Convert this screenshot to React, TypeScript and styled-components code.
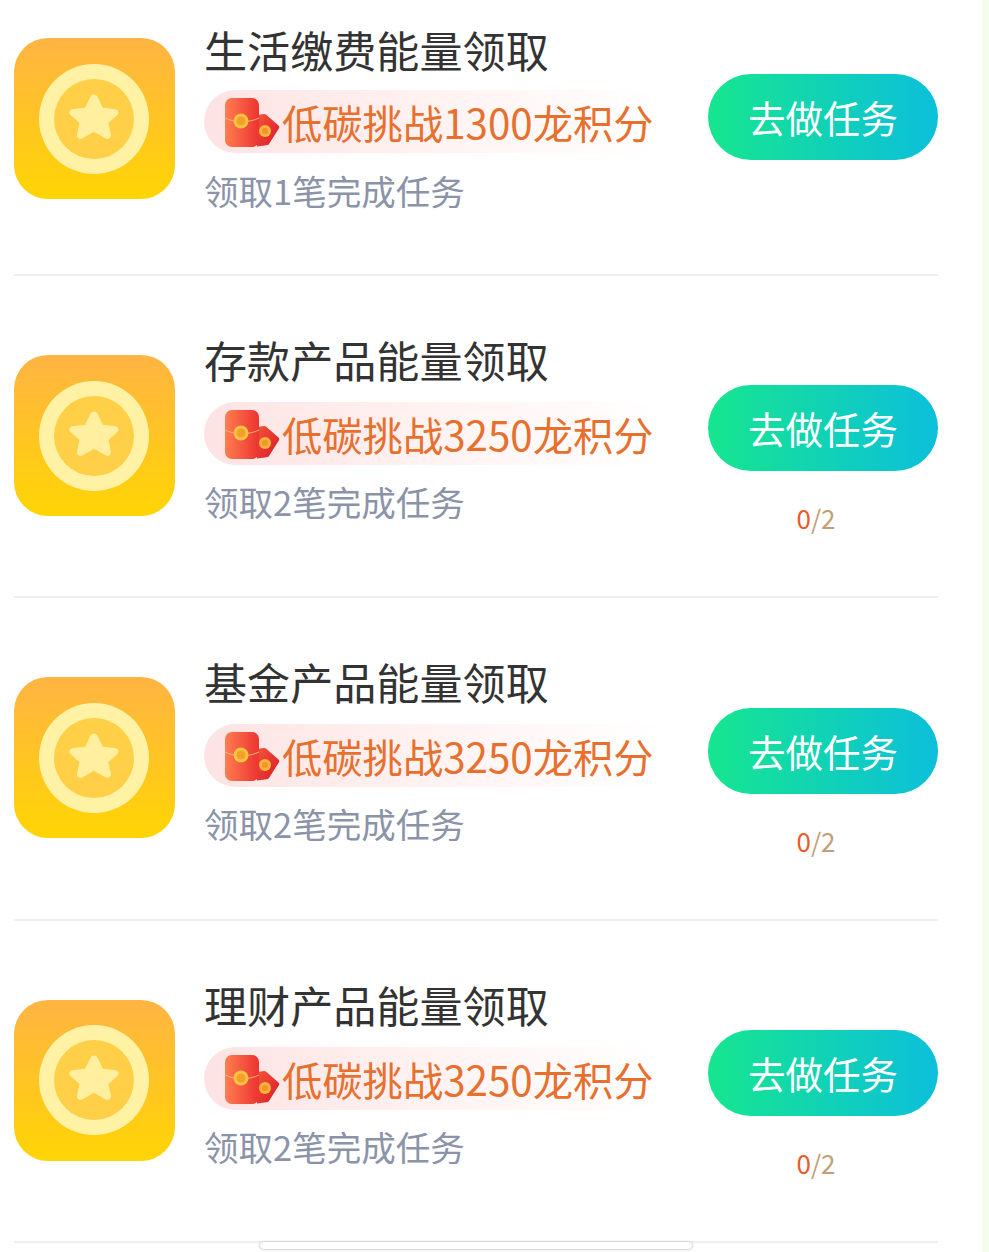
import React from 'react';
import styled, { createGlobalStyle } from 'styled-components';

const GlobalStyle = createGlobalStyle`
  html, body {
    margin: 0;
    padding: 0;
    background: #fff;
    overflow: hidden;
  }
  body {
    font-family: "Noto Sans CJK SC", "Noto Sans", sans-serif;
  }
`;

const Page = styled.div`
  position: relative;
  width: 989px;
  height: 1252px;
  display: flex;
  overflow: hidden;
  background: #fff;
`;

const List = styled.div`
  width: 924px;
  margin-left: 14px;
`;

const SideStrip = styled.div`
  width: 7px;
  margin-left: auto;
  background: #f3fde9;
`;

const Row = styled.div<{ $first?: boolean }>`
  display: flex;
  align-items: flex-start;
  box-sizing: border-box;
  height: ${p => (p.$first ? '276px' : '322.4px')};
  border-bottom: 2px solid #efefef;
`;

const CoinTile = styled.div<{ $first?: boolean }>`
  width: 161px;
  height: 161px;
  padding-right: 2px;
  box-sizing: border-box;
  margin-top: ${p => (p.$first ? '38px' : '79px')};
  border-radius: 34px;
  background: linear-gradient(180deg, #ffb443 0%, #ffd504 100%);
  display: flex;
  align-items: center;
  justify-content: center;
  flex-shrink: 0;
`;

const Info = styled.div<{ $first?: boolean }>`
  margin-top: ${p => (p.$first ? '19px' : '53px')};
  margin-left: 29px;
  width: 504px;
  flex-shrink: 0;
`;

const Title = styled.div`
  font-size: 43.1px;
  line-height: 60px;
  color: #333;
`;

const Tag = styled.div<{ $first?: boolean }>`
  display: flex;
  align-items: center;
  width: 458px;
  height: 63px;
  margin-top: ${p => (p.$first ? '11px' : '13px')};
  padding-left: 20px;
  box-sizing: border-box;
  border-radius: 32px 0 0 32px;
  background: linear-gradient(90deg, #fde3e3 0%, #fff3f2 50%, #ffffff 100%);
`;

const TagText = styled.span`
  font-size: 40.3px;
  line-height: 63px;
  color: #e8702f;
  margin-left: 2px;
  white-space: nowrap;
`;

const Sub = styled.div<{ $first?: boolean }>`
  margin-top: ${p => (p.$first ? '12px' : '11px')};
  font-size: 34.5px;
  line-height: 50px;
  color: #8b93a8;
`;

const Action = styled.div<{ $first?: boolean }>`
  margin-top: ${p => (p.$first ? '74px' : '109.3px')};
  width: 230px;
  margin-left: auto;
  display: flex;
  flex-direction: column;
  flex-shrink: 0;
`;

const TaskButton = styled.div`
  height: 86px;
  border-radius: 43px;
  background: linear-gradient(90deg, #16e68f 0%, #0cbfdb 100%);
  color: #fff;
  font-size: 37.5px;
  line-height: 85px;
  text-align: center;
`;

const Counter = styled.div`
  margin-top: 27px;
  padding-right: 14px;
  text-align: center;
  font-size: 26px;
  line-height: 40px;
  color: #c39f78;
`;

const Done = styled.span`
  color: #ec5a2c;
`;

const HomeBar = styled.div`
  position: absolute;
  left: 259px;
  top: 1241px;
  width: 434px;
  height: 9px;
  box-sizing: border-box;
  border: 1px solid #dcdcdc;
  border-radius: 5px;
  background: #fff;
  box-shadow: 0 0 2px rgba(0, 0, 0, 0.12);
`;

const PacketSvg = styled.svg`
  margin-top: 3px;
  flex-shrink: 0;
`;

const CoinIcon = () => (
  <svg width="110" height="110" viewBox="0 0 110 110">
    <circle cx="55" cy="55" r="55" fill="#fff2a4" />
    <circle cx="55" cy="55" r="40" fill="#ffcf47" />
    <path
      transform="translate(-5 -0.500) scale(1.09 1.02)"
      d="M55 30.500c1.600 0 2.800 1 3.500 2.600l4.600 10.200 10.900 1.300c3.400.4 4.600 3.900 2.300 6.200l-8 7.600 2.200 11c.7 3.300-2.200 5.500-5.100 3.900L55 66.900l-10.400 6.400c-2.900 1.600-5.800-.6-5.100-3.900l2.200-11-8-7.600c-2.300-2.300-1.100-5.800 2.300-6.200l10.900-1.300 4.600-10.200c.7-1.600 1.900-2.600 3.500-2.600z"
      fill="#ffef9e"
    />
  </svg>
);

const RedPacket = ({ id }: { id: string }) => (
  <PacketSvg width="56" height="50" viewBox="0 0 56 50">
    <defs>
      <linearGradient id={`${id}a`} x1="0" y1="0" x2="1" y2="0">
        <stop offset="0" stopColor="#ff7d50" />
        <stop offset="1" stopColor="#ec3431" />
      </linearGradient>
      <linearGradient id={`${id}b`} x1="0" y1="0" x2="1" y2="1">
        <stop offset="0" stopColor="#f4553a" />
        <stop offset="1" stopColor="#d9182a" />
      </linearGradient>
    </defs>
    <path
      d="M33 17l7-1c1 0 1.800.3 2.500 1l12 10.500c1 1 1 2 .3 3L45 46c-.7.8-1.500 1.200-2.500 1.300l-9.500 1.200z"
      fill={`url(#${id}b)`}
    />
    <circle cx="41" cy="33" r="6" fill="#ffb63a" />
    <circle cx="41" cy="33" r="3.200" fill="#f7942c" />
    <rect x="1" y="0" width="34" height="49" rx="7" fill={`url(#${id}a)`} />
    <path d="M1 20c10 5 24 5 34 0" fill="none" stroke="#ffb36a" strokeWidth="1" />
    <circle cx="17" cy="23" r="7.500" fill="#ffc43d" />
    <circle cx="17" cy="23" r="4.500" fill="#f5a02c" />
  </PacketSvg>
);

interface Task {
  title: string;
  reward: string;
  desc: string;
  progress?: [number, number];
}

const tasks: Task[] = [
  { title: '生活缴费能量领取', reward: '低碳挑战1300龙积分', desc: '领取1笔完成任务' },
  { title: '存款产品能量领取', reward: '低碳挑战3250龙积分', desc: '领取2笔完成任务', progress: [0, 2] },
  { title: '基金产品能量领取', reward: '低碳挑战3250龙积分', desc: '领取2笔完成任务', progress: [0, 2] },
  { title: '理财产品能量领取', reward: '低碳挑战3250龙积分', desc: '领取2笔完成任务', progress: [0, 2] },
];

const App: React.FC = () => (
  <Page>
    <GlobalStyle />
    <List>
      {tasks.map((task, index) => {
        const first = index === 0;
        return (
          <Row key={index} $first={first}>
            <CoinTile $first={first}>
              <CoinIcon />
            </CoinTile>
            <Info $first={first}>
              <Title>{task.title}</Title>
              <Tag $first={first}>
                <RedPacket id={`rp${index}`} />
                <TagText>{task.reward}</TagText>
              </Tag>
              <Sub $first={first}>{task.desc}</Sub>
            </Info>
            <Action $first={first}>
              <TaskButton>去做任务</TaskButton>
              {task.progress && (
                <Counter>
                  <Done>{task.progress[0]}</Done>/{task.progress[1]}
                </Counter>
              )}
            </Action>
          </Row>
        );
      })}
    </List>
    <SideStrip />
    <HomeBar />
  </Page>
);

export default App;
